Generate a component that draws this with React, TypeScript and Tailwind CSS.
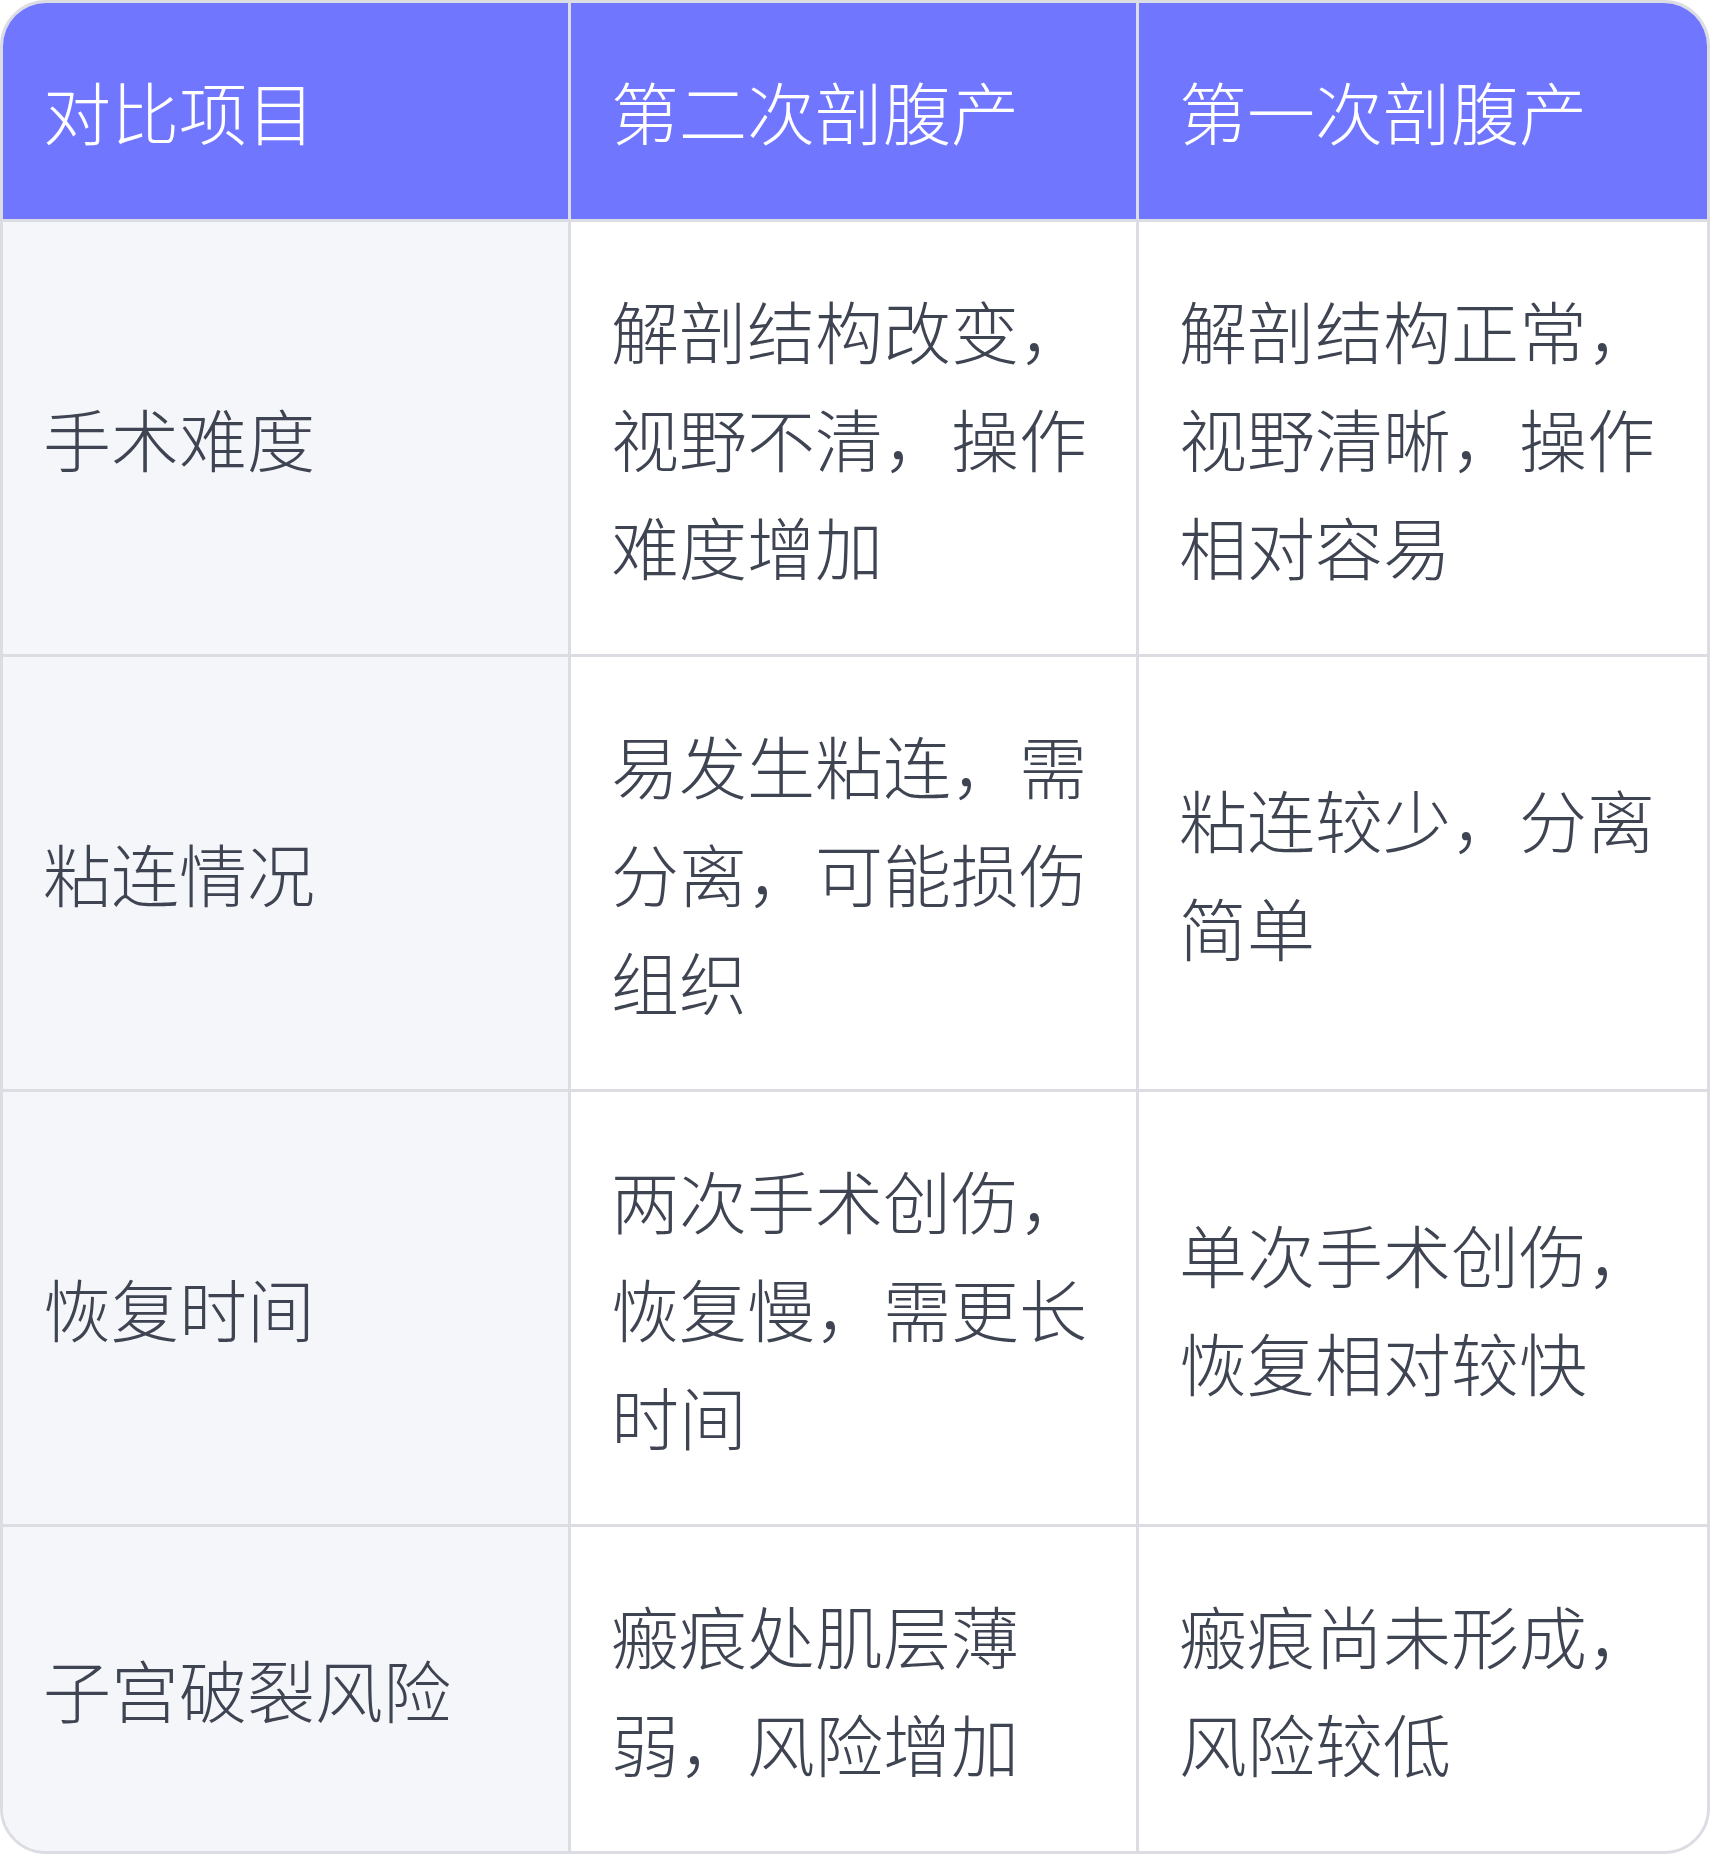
import React from "react";

const header = ["对比项目", "第二次剖腹产", "第一次剖腹产"];
const rows: string[][] = [
  ["手术难度", "解剖结构改变，视野不清，操作难度增加", "解剖结构正常，视野清晰，操作相对容易"],
  ["粘连情况", "易发生粘连，需分离，可能损伤组织", "粘连较少，分离简单"],
  ["恢复时间", "两次手术创伤，恢复慢，需更长时间", "单次手术创伤，恢复相对较快"],
  ["子宫破裂风险", "瘢痕处肌层薄弱，风险增加", "瘢痕尚未形成，风险较低"],
];

export default function App() {
  return (
    <div
      className="w-[1710px] bg-white"
      style={{ fontFamily: '"Noto Sans CJK SC", "Noto Sans", sans-serif' }}
    >
      <div className="border-[3px] border-[#dcdde3] rounded-[46px] overflow-hidden">
        <div className="grid grid-cols-3">
          {header.map((h, i) => (
            <div
              key={i}
              className={`flex items-center bg-[#7176ff] text-white text-[68px] leading-[108px] font-light px-[40px] py-[54px] border-b-[3px] border-[#dcdde3] ${i < 2 ? "border-r-[3px]" : ""}`}
            >
              {h}
            </div>
          ))}
          {rows.map((r, ri) =>
            r.map((c, ci) => (
              <div
                key={`${ri}-${ci}`}
                className={`flex items-center text-[#3f4452] text-[68px] leading-[108px] font-light px-[40px] py-[54px] border-[#dcdde3] ${ci === 0 ? "bg-[#f5f6fa]" : "bg-white"} ${ci < 2 ? "border-r-[3px]" : ""} ${ri < rows.length - 1 ? "border-b-[3px]" : ""}`}
              >
                <span>{c}</span>
              </div>
            ))
          )}
        </div>
      </div>
    </div>
  );
}
